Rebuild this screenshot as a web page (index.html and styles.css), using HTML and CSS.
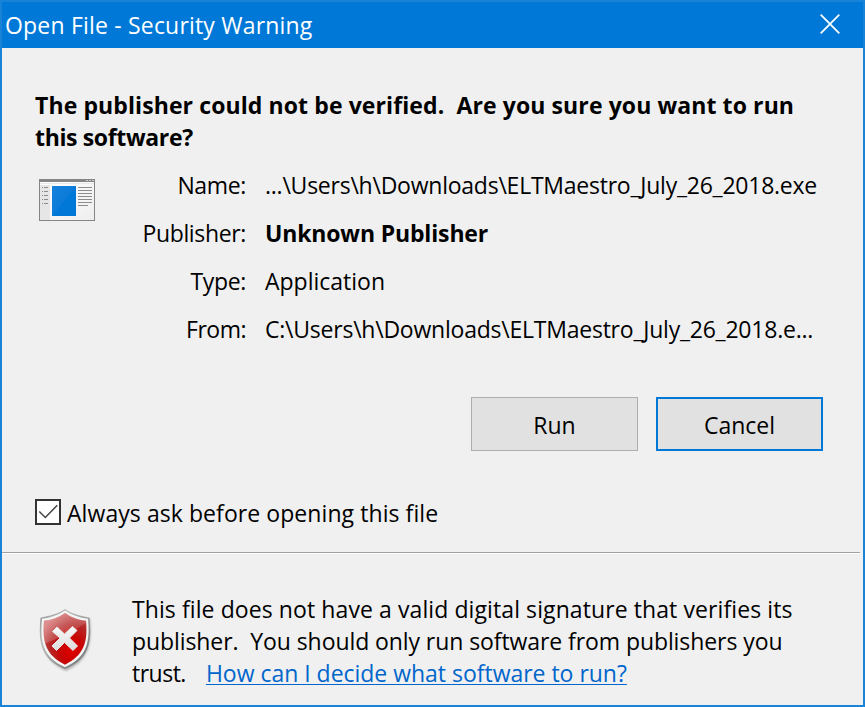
FILE: index.html
```html
<!DOCTYPE html>
<html lang="en">
<head>
<meta charset="utf-8">
<title>Open File - Security Warning</title>
<link rel="stylesheet" href="styles.css">
</head>
<body>
<main class="dialog">
  <header class="titlebar">
    <h1 class="title">Open File - Security Warning</h1>
    <svg class="close" viewBox="0 0 20 20" width="20" height="20"><path d="M.7.7 19.3 19.3M19.3.7.7 19.3" stroke="#fff" stroke-width="1.8"/></svg>
  </header>
  <section class="content">
    <h2 class="question"><span class="q1">The publisher could not be verified.&nbsp; Are you sure you want to run</span><br><span class="q2">this software?</span></h2>
    <div class="info">
      <svg class="app-icon" viewBox="0 0 56 42" width="56" height="42">
        <defs>
          <linearGradient id="page" x2="1" y2="1"><stop stop-color="#fff"/><stop offset="1" stop-color="#eee"/></linearGradient>
          <linearGradient id="blue" x2="1" y2="1"><stop stop-color="#1682dc"/><stop offset=".5" stop-color="#0b7bd9"/><stop offset=".51" stop-color="#0078d7"/></linearGradient>
        </defs>
        <path fill="#858585" d="M0 0h56v42H0z"/>
        <path fill="url(#page)" d="M1 3h54v38H1z"/>
        <path fill="#e6e6e6" d="M1 6h10v35H1z"/>
        <path fill="#e9e9e9" d="M1 4h54v1H1z"/>
        <path fill="#ccc" d="M47 1h2v1h-2zM50 1h2v1h-2zM53 1h2v1h-2z"/>
        <path fill="url(#blue)" d="M13 7h24v30H13z"/>
        <path fill="#8b8b8b" d="M3 8h1v1H3zM5 8h4v1H5zM3 12h1v1H3zM5 12h4v1H5zM3 16h1v1H3zM5 16h4v1H5zM3 20h1v1H3zM5 20h4v1H5zM3 24h1v1H3zM5 24h4v1H5zM39 8h14v1H39zM39 11h14v1H39zM39 14h14v1H39zM39 17h14v1H39zM39 20h14v1H39zM39 23h14v1H39zM39 26h10v1H39z"/>
      </svg>
      <dl class="details">
        <dt class="k1">Name:</dt><dd class="v1">...\Users\h\Downloads\ELTMaestro_July_26_2018.exe</dd>
        <dt class="k2">Publisher:</dt><dd class="v2">Unknown Publisher</dd>
        <dt class="k3">Type:</dt><dd class="v3">Application</dd>
        <dt class="k4">From:</dt><dd class="v4">C:\Users\h\Downloads\ELTMaestro_July_26_2018.e...</dd>
      </dl>
    </div>
    <div class="actions">
      <button class="button">Run</button>
      <button class="button default">Cancel</button>
    </div>
    <div class="ask">
      <svg class="checkbox" viewBox="0 0 26 26" width="26" height="26"><path d="M1 1h24v24H1z" fill="#fff" stroke="#333" stroke-width="2"/><path d="m4.3 12.500 6 6L22.300 6.200" fill="none" stroke="#444" stroke-width="1.500"/></svg>
      <span class="ask-label">Always ask before opening this file</span>
    </div>
  </section>
  <footer class="notice">
    <svg class="shield" viewBox="0 0 56 64" width="56" height="64">
      <defs>
        <linearGradient id="rim" x2="1" y2="1"><stop stop-color="#8d9191"/><stop offset=".3" stop-color="#bbb"/><stop offset="1" stop-color="#676b6b"/></linearGradient>
        <radialGradient id="red" cx=".65" cy=".72" r=".75"><stop stop-color="#e00000"/><stop offset=".35" stop-color="#c80404"/><stop offset=".7" stop-color="#b42a2a"/><stop offset="1" stop-color="#c55"/></radialGradient>
        <linearGradient id="gloss" x2="1" y2="1"><stop stop-color="#fff" stop-opacity=".42"/><stop offset="1" stop-color="#fff" stop-opacity="0"/></linearGradient>
        <linearGradient id="cross" x2="0" y2="1"><stop stop-color="#f8f8f8"/><stop offset="1" stop-color="#ddd"/></linearGradient>
        <filter id="shadow"><feGaussianBlur stdDeviation="1"/></filter>
      </defs>
      <g transform="translate(0 1) scale(1 .985)">
        <path d="M26 2C19 7 10 8 3 9C1 34 2 51 26 62C50 51 52 34 50 9C42 8 33 7 26 2Z" transform="translate(1 1)" fill="#777" opacity=".5" filter="url(#shadow)"/>
        <path d="M26 0C19 5 10 7 1.500 9C-1 34 2 51 26 61C50 51 53 34 50.500 9C42 7 33 5 26 0Z" fill="url(#rim)"/>
        <path d="M26 1.600C19 6.500 11 9 3 10C.8 34 4 49 26 59.200C48 49 51.200 34 49 10C41 9 33 6.500 26 1.600Z" fill="#f3f4f4"/>
        <path d="M26 4C19 9 12 11 5 12C3 34 7 47 26 56.500C45 47 49 34 47 12C40 11 33 9 26 4Z" fill="url(#red)"/>
        <path d="M26 4C19 9 12 11 5 12C4 21 4 28 6 35C16 31 32 25 47 14V12C40 11 33 9 26 4Z" fill="url(#gloss)"/>
      </g>
      <path d="m18 19 7.500 7 8-7.500 4.500 4-7.500 7.500 8 8-4.500 4.500-8.500-8-8 8-4.500-4.500 8-8-7.500-6.500Z" fill="url(#cross)" stroke="#e8e8e8" stroke-width="1" stroke-linejoin="round"/>
    </svg>
    <p class="message"><span class="m1">This file does not have a valid digital signature that verifies its</span><br><span class="m2">publisher.&nbsp; You should only run software from publishers you</span><br><span class="m3">trust.</span><a class="help" href="#">How can I decide what software to run?</a></p>
  </footer>
</main>
</body>
</html>
```
FILE: styles.css
```css
* { box-sizing: border-box; }
body { margin: 0; background: #f0f0f0; color: #000; font: 23px/32px "Open Sans", "Noto Sans", sans-serif; white-space: nowrap; }
svg { flex: none; }
.dialog { width: 865px; height: 707px; border: 2px solid #1883d7; background: #f0f0f0; overflow: hidden; }
.titlebar { display: flex; justify-content: space-between; height: 46px; padding: 7px 23px 0 3px; background: #0078d7; color: #fff; }
.title { margin: 0; font-size: 23px; font-weight: 400; line-height: 32px; letter-spacing: .19px; }
.close { margin-top: 5px; }
.content { height: 504px; padding: 41px 40px 0 33px; }
.question { margin: 0; font-size: 23px; font-weight: 700; line-height: 32px; }
.q1 { letter-spacing: .1px; }
.q2 { letter-spacing: -.35px; }
.info { display: flex; padding: 16px 0 0 4px; }
.app-icon { margin-top: 10px; }
.details { display: grid; grid-template-columns: 151px 1fr; column-gap: 19px; grid-auto-rows: 48px; margin: 0; line-height: 32px; }
.details dt { text-align: right; letter-spacing: -.35px; }
.details .k4 { letter-spacing: -.5px; }
.details dd { margin: 0; }
.details .v1 { letter-spacing: -.24px; }
.details .v2 { font-weight: 700; letter-spacing: -.15px; }
.details .v4 { letter-spacing: -.23px; }
.actions { display: flex; justify-content: flex-end; gap: 18px; padding-top: 36px; }
.button { width: 167px; height: 54px; padding: 2px 0 0; border: 1px solid #adadad; background: #e1e1e1; color: #000; font: inherit; }
.default { border: 2px solid #0078d7; }
.ask { display: flex; gap: 6px; padding-top: 48px; }
.ask-label { margin-top: -2px; letter-spacing: .07px; }
.notice { display: flex; margin-right: 3px; padding: 40px 0 0 37px; border-top: 1px solid #a0a0a0; box-shadow: inset 0 1px #fff; }
.shield { margin-top: 15px; }
.message { margin: 0 0 0 37px; }
.m1 { letter-spacing: .09px; }
.m2 { letter-spacing: -.08px; }
.m3 { letter-spacing: -.5px; }
.help { margin-left: 20px; letter-spacing: -.02px; color: #0066cc; text-decoration-thickness: 1px; text-underline-offset: 2px; }
```
